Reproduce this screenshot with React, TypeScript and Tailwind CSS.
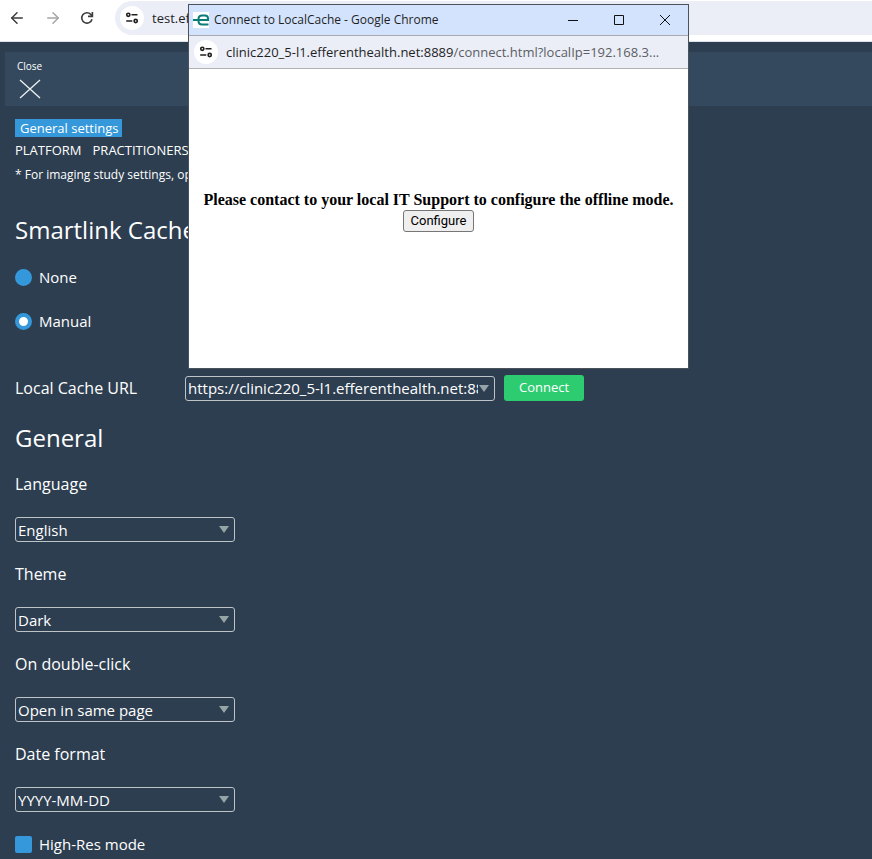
import React from "react";
import { ArrowLeft, ArrowRight } from "lucide-react";

function TuneIcon() {
  return (
    <svg viewBox="0 0 14 14" className="h-3.5 w-3.5" fill="none" stroke="#1f1f1f" strokeWidth="1.6" aria-hidden="true">
      <circle cx="3.3" cy="3.8" r="1.6" />
      <path d="M6.5 3.8H12.5M1.2 10H7.3" />
      <circle cx="10.7" cy="10" r="1.6" />
    </svg>
  );
}

function ReloadIcon() {
  return (
    <svg viewBox="0 0 14 14" className="h-3.5 w-3.5" fill="none" stroke="#3c3c3c" strokeWidth="1.6" aria-hidden="true">
      <path d="M12 8.2A5.2 5.2 0 1 1 10.8 3.4L12.2 5" />
      <path d="M12.4 1V5.4H8" />
    </svg>
  );
}

function BrandIcon() {
  return (
    <svg viewBox="0 0 16 16" className="h-4 w-4 bg-white" fill="none" stroke="#0b7d78" strokeWidth="2" aria-hidden="true">
      <path d="M0 8H15V6.5Q15 3.5 12 3.5H9Q5.500 3.500 5.500 7V9Q5.500 12.500 9 12.500H15.500" />
    </svg>
  );
}

function Select({ id, options, label, className = "" }: { id: string; options: string[]; label?: string; className?: string }) {
  return (
    <div className={`relative h-[25px] ${className}`}>
      <select
        id={id}
        aria-label={label}
        className="block h-full w-full appearance-none rounded-[3px] border border-[#bdc3c7] bg-transparent pr-4 pl-0.5 text-[15px] leading-5 text-white"
      >
        {options.map((o) => (
          <option key={o} className="bg-[#2d3e50]">{o}</option>
        ))}
      </select>
      <svg viewBox="0 0 10 7" className="pointer-events-none absolute top-[9px] right-1.5 h-[7px] w-2.5" aria-hidden="true">
        <path d="M0 0H10L5 7Z" fill="#95a5a6" />
      </svg>
    </div>
  );
}

function Field({ id, label, options }: { id: string; label: string; options: string[] }) {
  return (
    <div className="mb-5">
      <label htmlFor={id} className="mb-[21px] block w-fit leading-6">{label}</label>
      <Select id={id} options={options} className="w-[220px]" />
    </div>
  );
}

function Radio({ label, checked }: { label: string; checked?: boolean }) {
  return (
    <label className="flex h-6 w-fit items-center gap-[7px] text-[15px]">
      <input
        type="radio"
        name="cache"
        defaultChecked={checked}
        className="h-[17px] w-[17px] appearance-none rounded-full border-4 border-[#3498db] bg-[#3498db] checked:bg-white"
      />
      {label}
    </label>
  );
}

function Popup() {
  return (
    <section
      role="dialog"
      aria-label="Connect to LocalCache"
      className="absolute top-1 left-[188px] w-[501px] border border-[#4a535c] bg-white text-black"
    >
      <header className="flex h-[31px] items-center border-b border-[#a9abb0] bg-[#d3e3fd] pl-1">
        <BrandIcon />
        <h2 className="ml-[5px] flex-1 text-[12px] leading-4 whitespace-nowrap text-[#1f1f1f]">Connect to LocalCache - Google Chrome</h2>
        <button aria-label="Minimize" className="flex h-full w-[46px] items-center justify-center">
          <svg viewBox="0 0 12 12" className="h-3 w-3" stroke="#111" fill="none"><path d="M1 6.500H11" /></svg>
        </button>
        <button aria-label="Maximize" className="flex h-full w-[46px] items-center justify-center">
          <svg viewBox="0 0 12 12" className="h-3 w-3" stroke="#111" fill="none"><path d="M1.500 1.500H10.500V10.500H1.500Z" /></svg>
        </button>
        <button aria-label="Close window" className="flex h-full w-[46px] items-center justify-center">
          <svg viewBox="0 0 12 12" className="h-3 w-3" stroke="#111" fill="none"><path d="M1 1L11 11M11 1L1 11" /></svg>
        </button>
      </header>
      <div className="flex h-[33px] items-center border-b border-[#b0b1b5] bg-[#ebeef7] pl-[5px]">
        <button aria-label="View site information" className="flex h-6 w-6 items-center justify-center rounded-full bg-white">
          <TuneIcon />
        </button>
        <span className="ml-2 text-[13px] leading-5 whitespace-nowrap text-[#1f1f1f]">
          clinic220_5-l1.efferenthealth.net:8889<span className="text-[#5b5e63]">/connect.html?localIp=192.168.3...</span>
        </span>
      </div>
      <div className="flex h-[299px] flex-col items-center pt-[121px] font-['Liberation_Serif',serif]">
        <p className="text-[16px] leading-5 font-bold whitespace-nowrap">
          Please contact to your local IT Support to configure the offline mode.
        </p>
        <button className="h-[22px] w-[71px] rounded-[3px] border border-[#767676] bg-[#efefef] font-[Roboto,sans-serif] text-[13px] leading-5">
          Configure
        </button>
      </div>
    </section>
  );
}

export default function App() {
  return (
    <div className="relative flex min-h-screen flex-col overflow-hidden bg-[#2d3e50] font-['Open_Sans',sans-serif] text-base text-white">
      <div className="flex h-[42px] items-start border-b border-[#dfe2e6] bg-white pt-px">
        <div className="flex h-[34px] w-[115px] items-center gap-[18px] pl-2">
          <button aria-label="Back"><ArrowLeft size={18} strokeWidth={2} color="#3c3c3c" /></button>
          <button aria-label="Forward"><ArrowRight size={18} strokeWidth={2} color="#a5a5a5" /></button>
          <button aria-label="Reload"><ReloadIcon /></button>
        </div>
        <div className="flex h-[34px] flex-1 items-center rounded-l-full bg-[#ebeef7] pl-[5px]">
          <button aria-label="Site information" className="flex h-6 w-6 items-center justify-center rounded-full bg-white">
            <TuneIcon />
          </button>
          <span className="ml-2 text-[13px] leading-5 text-[#1f1f1f]">test.ef</span>
        </div>
      </div>

      <div className="mt-2.5 ml-[5px] h-[54px] bg-[#34495e]">
        <button className="ml-3 flex flex-col items-start pt-1.5 text-[10px] leading-4">
          Close
          <svg viewBox="0 0 22 22" className="mt-1 ml-0.5 h-[22px] w-[22px]" stroke="#ecf0f1" fill="none" strokeWidth="1.3" aria-hidden="true">
            <path d="M1 2L21 20M21 2L1 20" />
          </svg>
        </button>
      </div>

      <main className="px-[15px] pt-[13px]">
        <nav className="text-[13px]">
          <a href="#general" className="block h-[18px] w-fit bg-[#3498db] pr-[3px] pl-[5px] leading-[18px]">General settings</a>
          <div className="mt-0.5 flex gap-[11px] leading-[22px]">
            <a href="#platform">PLATFORM</a>
            <a href="#practitioners">PRACTITIONERS</a>
          </div>
        </nav>
        <p className="mt-0.5 text-[12px] leading-6 whitespace-nowrap">* For imaging study settings, op</p>

        <h1 className="mt-[25px] text-2xl leading-9 whitespace-nowrap">Smartlink Cache</h1>
        <div className="mt-[17px] flex flex-col gap-5">
          <Radio label="None" />
          <Radio label="Manual" checked />
        </div>

        <div className="mt-[42px] flex h-[26px] items-center">
          <label htmlFor="cache-url" className="w-[170px]">Local Cache URL</label>
          <Select id="cache-url" options={["https://clinic220_5-l1.efferenthealth.net:8889"]} className="w-[310px]" />
          <button className="ml-[9px] h-[26px] w-20 rounded-[3px] bg-[#2ecc71] text-[13px]">Connect</button>
        </div>

        <h1 className="mt-[19px] mb-4 text-2xl leading-9">General</h1>
        <Field id="language" label="Language" options={["English"]} />
        <Field id="theme" label="Theme" options={["Dark"]} />
        <Field id="double-click" label="On double-click" options={["Open in same page"]} />
        <Field id="date-format" label="Date format" options={["YYYY-MM-DD"]} />
        <label className="flex h-6 w-fit items-center gap-[7px] text-[15px]">
          <input type="checkbox" className="h-[17px] w-[17px] appearance-none rounded-[2px] bg-[#3498db] checked:border-4 checked:border-[#3498db] checked:bg-white" />
          High-Res mode
        </label>
      </main>

      <Popup />
    </div>
  );
}
